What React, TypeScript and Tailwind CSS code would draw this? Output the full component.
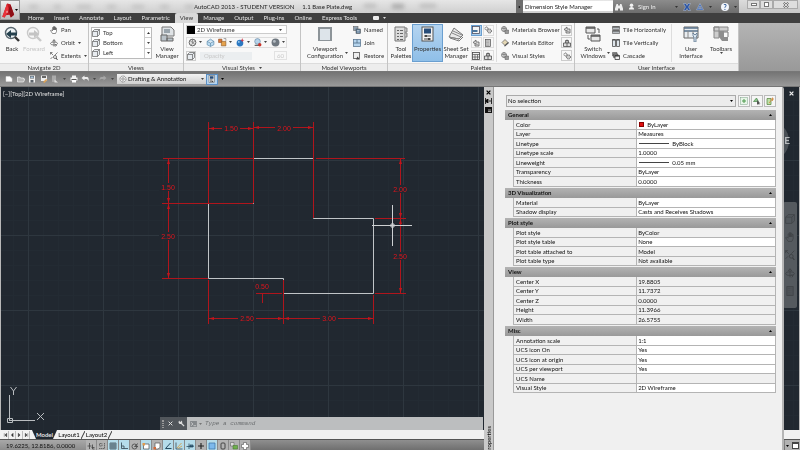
import { ReactNode } from "react";
import clsx from "clsx";

const TABS = [
  "Home", "Insert", "Annotate", "Layout", "Parametric", "View",
  "Manage", "Output", "Plug-ins", "Online", "Express Tools",
];

type Row = { label: string; value: string; readOnly?: boolean; kind?: "swatch" | "line" };

const SECTIONS: { title: string; rows: Row[] }[] = [
  {
    title: "General",
    rows: [
      { label: "Color", value: "ByLayer", kind: "swatch" },
      { label: "Layer", value: "Measures" },
      { label: "Linetype", value: "ByBlock", kind: "line" },
      { label: "Linetype scale", value: "1.0000" },
      { label: "Lineweight", value: "0.05 mm", kind: "line" },
      { label: "Transparency", value: "ByLayer" },
      { label: "Thickness", value: "0.0000" },
    ],
  },
  {
    title: "3D Visualization",
    rows: [
      { label: "Material", value: "ByLayer" },
      { label: "Shadow display", value: "Casts and Receives Shadows" },
    ],
  },
  {
    title: "Plot style",
    rows: [
      { label: "Plot style", value: "ByColor", readOnly: true },
      { label: "Plot style table", value: "None" },
      { label: "Plot table attached to", value: "Model", readOnly: true },
      { label: "Plot table type", value: "Not available", readOnly: true },
    ],
  },
  {
    title: "View",
    rows: [
      { label: "Center X", value: "19.8805", readOnly: true },
      { label: "Center Y", value: "11.7372", readOnly: true },
      { label: "Center Z", value: "0.0000", readOnly: true },
      { label: "Height", value: "11.3966", readOnly: true },
      { label: "Width", value: "26.5755", readOnly: true },
    ],
  },
  {
    title: "Misc",
    rows: [
      { label: "Annotation scale", value: "1:1" },
      { label: "UCS icon On", value: "Yes" },
      { label: "UCS icon at origin", value: "Yes" },
      { label: "UCS per viewport", value: "Yes" },
      { label: "UCS Name", value: "", readOnly: true },
      { label: "Visual Style", value: "2D Wireframe" },
    ],
  },
];

// All glyphs are drawn on a 16x16 grid
const GLYPHS: Record<string, ReactNode> = {
  back: (
    <>
      <circle cx="7" cy="7" r="5.5" fill="#eef3f5" stroke="#59666e" strokeWidth="1.4" />
      <path d="M11 11l4 4" stroke="#333" strokeWidth="2.4" />
      <path d="M2 8l5-4v2.5h6v3H7V12z" fill="#24404d" />
    </>
  ),
  forward: (
    <>
      <circle cx="7" cy="7" r="5.5" fill="#f7f7f7" stroke="#c9c9c9" strokeWidth="1.4" />
      <path d="M11 11l4 4" stroke="#c9c9c9" strokeWidth="2.4" />
      <path d="M13 8L8 4v2.5H3v3h5V12z" fill="#c4c4c4" />
    </>
  ),
  pan: <path d="M5 15L1 9l2-1 2 2V3h2v5-7h2v7-6h2v6-4h2v7l-2 4z" fill="#fff" stroke="#555" strokeWidth="1.3" />,
  orbit: (
    <>
      <ellipse cx="8" cy="9" rx="7" ry="3" fill="none" stroke="#555" strokeWidth="1.4" />
      <path d="M8 15V2M5 5l3-4 3 4M10 11l3 1-2 3" fill="none" stroke="#555" strokeWidth="1.5" />
    </>
  ),
  extents: (
    <>
      <path d="M1 1l5 5M15 1l-5 5M1 14l4-4M1 5V1h4" fill="none" stroke="#555" strokeWidth="1.4" />
      <circle cx="10" cy="10" r="3" fill="#fff" stroke="#444" strokeWidth="1.5" />
      <path d="M12 12l3 4" stroke="#444" strokeWidth="2" />
    </>
  ),
  cube: (
    <>
      <path d="M1 5l4-4h10v10l-4 4H1z" fill="#e8ecf0" stroke="#555" strokeWidth="1.3" />
      <path d="M1 5h10v10M11 5l4-4" fill="none" stroke="#555" strokeWidth="1.3" />
    </>
  ),
  viewManager: (
    <>
      <path d="M3 1h9l3 3v6H3z" fill="#dfe3e6" stroke="#777" />
      <rect x="5" y="3" width="6" height="4" fill="#9aa5ad" />
      <path d="M2 9h6v6H2zM8 12h6v3H8z" fill="#b9c2c9" stroke="#666" />
    </>
  ),
  wheel: (
    <>
      <circle cx="8" cy="8" r="6" fill="#e4e4e4" stroke="#555" strokeWidth="1.5" />
      <path d="M4 5l8 6M12 5l-6 7M8 2v5" stroke="#555" />
    </>
  ),
  cubeBlue: <path d="M2 6l6-4 6 4v6l-6 3-6-3zM2 6l6 3 6-3M8 9v6" fill="#bcdcf2" stroke="#5a87a8" strokeWidth="1.2" />,
  cubeOrange: (
    <>
      <path d="M1 2h6v6H1z" fill="#d9793b" stroke="#8d4a1e" />
      <path d="M6 6h8v8H6z" fill="#e6a24c" stroke="#835022" />
      <path d="M10 1h4v4" fill="none" stroke="#666" />
    </>
  ),
  ballBlue: (
    <>
      <circle cx="7" cy="9" r="6" fill="#2b78c2" />
      <circle cx="5" cy="7" r="1.6" fill="#9fcdf0" />
      <path d="M11 0l1 3 3 1-3 1-1 3-1-3-2-1 2-1z" fill="#c34" />
    </>
  ),
  ballRed: (
    <>
      <circle cx="8" cy="6" r="5" fill="#b6d3ea" stroke="#5a7d99" />
      <path d="M3 13h10" stroke="#555" strokeWidth="2" />
      <circle cx="12" cy="12" r="3" fill="#c9342b" />
    </>
  ),
  ballGray: (
    <>
      <circle cx="8" cy="8" r="7" fill="#6f7880" />
      <circle cx="6" cy="6" r="2.5" fill="#b4bcc3" />
    </>
  ),
  frame: (
    <>
      <rect x="1" y="1" width="14" height="14" fill="#8d9499" />
      <rect x="3" y="3" width="10" height="11" fill="#dde4ea" />
    </>
  ),
  named: (
    <>
      <rect x="1" y="1" width="9" height="8" fill="#8fa2b3" stroke="#555" />
      <rect x="6" y="6" width="9" height="9" fill="#5c7c99" stroke="#444" />
      <path d="M8 9h5M8 12h5" stroke="#fff" />
    </>
  ),
  join: (
    <>
      <rect x="1" y="1" width="14" height="14" fill="#b6d5ee" stroke="#4f6c86" strokeWidth="1.4" />
      <path d="M1 8h14M8 1v7" stroke="#4f6c86" strokeWidth="1.6" />
    </>
  ),
  restore: (
    <>
      <rect x="1" y="1" width="12" height="12" fill="#eee" stroke="#555" strokeWidth="1.6" />
      <path d="M6 15l3-6 5 6z" fill="#444" />
    </>
  ),
  toolPalettes: (
    <>
      <path d="M2 1h10v14H2z" fill="#dcdcdc" stroke="#777" />
      <path d="M12 2h2v4h-2M12 7h2v4h-2" fill="#bbb" stroke="#888" />
      <path d="M4 4h2v1H4zM4 7h2v1H4zM4 10h2v1H4zM4 13h2v1H4zM7 4h3v1H7zM7 7h3v1H7zM7 10h3v1H7zM7 13h3v1H7z" fill="#666" />
    </>
  ),
  properties: (
    <>
      <rect x="2" y="1" width="11" height="14" fill="#f2f2f2" stroke="#555" />
      <rect x="4" y="2.500" width="7" height="5" fill="#274c78" />
      <path d="M4 10h7M4 13h7" stroke="#444" strokeWidth="1.2" />
      <path d="M6 9v2M9 12v2" stroke="#444" strokeWidth="2" />
    </>
  ),
  sheetSet: (
    <>
      <path d="M1 11L6 2l9 7-4 4z" fill="#e9e9e9" stroke="#777" />
      <path d="M4 7l9 4M5 5l9 4M1 11l10 2" stroke="#888" />
      <path d="M2 12l9 3 4-4" fill="none" stroke="#777" />
    </>
  ),
  palette: (
    <>
      <rect x="1" y="1" width="14" height="14" fill="#f4f4f4" stroke="#445" strokeWidth="1.5" />
      <rect x="1" y="8" width="10" height="4" fill="#47749c" />
    </>
  ),
  gears: (
    <>
      <circle cx="5" cy="5" r="3" fill="none" stroke="#555" strokeWidth="2" strokeDasharray="2 1" />
      <circle cx="11" cy="10" r="4" fill="#ccc" stroke="#555" strokeWidth="2" strokeDasharray="2 1" />
    </>
  ),
  markup: <path d="M2 7l6-5v4h6v8H6V9zM6 9l5 2" fill="#ddd" stroke="#555" strokeWidth="1.5" />,
  calc: (
    <>
      <rect x="3" y="1" width="10" height="14" fill="#c9c9c9" stroke="#555" strokeWidth="1.4" />
      <path d="M5 4h6M5 7h6M5 10h6M5 13h6" stroke="#666" strokeDasharray="1 1" />
    </>
  ),
  gridCalc: (
    <>
      <rect x="1" y="1" width="14" height="14" fill="#eee" stroke="#444" strokeWidth="1.6" />
      <path d="M1 5h14M6 5v10M11 5v10M1 10h14" stroke="#444" strokeWidth="1.3" />
    </>
  ),
  toolbox: (
    <>
      <path d="M1 8h14v7H1z" fill="#ddd" stroke="#444" strokeWidth="1.5" />
      <path d="M5 8V3h6v5M8 1v14" fill="none" stroke="#444" strokeWidth="1.5" />
    </>
  ),
  material: (
    <>
      <circle cx="6" cy="6" r="5" fill="#ddd" stroke="#555" strokeWidth="1.3" />
      <path d="M2 5h9M6 1v10M8 8h7v7H8z" fill="#999" stroke="#555" />
    </>
  ),
  materialEdit: (
    <>
      <path d="M8 1l6 6-6 6-6-6z" fill="#e4d7b4" stroke="#555" strokeWidth="1.3" />
      <path d="M6 14l8-8 2 2-8 7z" fill="#555" />
    </>
  ),
  switchWin: (
    <>
      <path d="M1 1h9v6H1zM6 9h9v6H6z" fill="#e8e8e8" stroke="#555" />
      <path d="M1 2h9M6 10h9" stroke="#555" strokeWidth="1.6" />
      <path d="M12 3h2v4M3 9v4h2" fill="none" stroke="#555" />
    </>
  ),
  tileH: (
    <>
      <path d="M1 1h14v6H1zM1 9h14v6H1z" fill="#b9bec2" stroke="#555" strokeWidth="1.2" />
      <path d="M1 2h14M1 10h14" stroke="#444" strokeWidth="2" />
    </>
  ),
  tileV: (
    <>
      <path d="M1 1h6v14H1zM9 1h6v14H9z" fill="#dfe6ec" stroke="#444" strokeWidth="1.5" />
      <path d="M1 2h6M9 2h6" stroke="#444" strokeWidth="2" />
    </>
  ),
  cascade: (
    <>
      <path d="M1 1h9v7H1zM3 4h9v7H3z" fill="#888" stroke="#444" />
      <path d="M6 7h9v8H6z" fill="#eee" stroke="#333" strokeWidth="1.5" />
      <path d="M6 8h9" stroke="#333" strokeWidth="2" />
    </>
  ),
  userInterface: (
    <>
      <path d="M1 1h14v11H1z" fill="#e9edf0" stroke="#666" />
      <path d="M1 2h14M1 5h14" stroke="#58718a" strokeWidth="1.6" />
      <path d="M5 5v7M10 5v3" stroke="#888" />
      <path d="M10 7l2 2 2-2v3l-1 1v5h-2v-5l-1-1z" fill="#dde8f2" stroke="#58718a" strokeWidth=".8" />
    </>
  ),
  toolbars: (
    <>
      <path d="M1 1h5v11H1zM1 1h14v4H1z" fill="#cdcdcd" stroke="#888" />
      <path d="M6 5h5v6h4v4H9l-3-4z" fill="#8d8d8d" />
      <path d="M11 6h4v5" fill="none" stroke="#777" />
    </>
  ),
  page: <path d="M2 3h8l4 4v6H2z" fill="#fff" stroke="#ddd" />,
  open: <path d="M1 4h5l1 2h6v2h3l-3 6H1z" fill="#b4b4b4" stroke="#fff" strokeWidth="1.2" />,
  save: (
    <>
      <path d="M2 1h12v14H2z" fill="#f2f2f2" />
      <path d="M4 2h8v5H4zM5 10h6v5H5z" fill="#5d646b" />
      <path d="M5 3h6v3H5z" fill="#a9c2d9" />
    </>
  ),
  saveAs: (
    <>
      <path d="M2 1h12v11H2z" fill="#eee" />
      <path d="M4 2h8v4H4z" fill="#666" />
      <path d="M6 14l6-6 3 2-6 6z" fill="#d9a25a" />
    </>
  ),
  cloud: (
    <>
      <path d="M2 1h8v13H2z" fill="#aaa" />
      <path d="M7 9l7 6H7z" fill="#ddd" />
    </>
  ),
  print: (
    <>
      <path d="M4 1h8v4H4zM1 5h14v6H1z" fill="#f2f2f2" />
      <path d="M3 9h10" stroke="#555" strokeWidth="2" />
      <path d="M4 10h8v5H4z" fill="#fff" />
    </>
  ),
  undo: <path d="M1 6l6-5v3h5c3 0 4 3 3 9-1-4-3-5-5-5H7v3z" fill="#ececec" />,
  redo: <path d="M15 6L9 1v3H5C2 4 1 7 1 11c1-3 3-3 5-3h3v3z" fill="#a6a6a6" />,
  gear: (
    <>
      <circle cx="8" cy="8" r="6" fill="#eee" stroke="#777" strokeWidth="2" strokeDasharray="2 1" />
      <circle cx="8" cy="8" r="2.5" fill="none" stroke="#777" strokeWidth="1.4" />
    </>
  ),
  binoculars: <path d="M3 2h3v3h4V2h3l3 9v4h-6v-4H6v4H0v-4z" fill="#eee" />,
  person: (
    <>
      <circle cx="8" cy="5" r="4" fill="#f2f2f2" />
      <path d="M2 15c0-4 2-6 6-6s6 2 6 6z" fill="#f2f2f2" />
    </>
  ),
  exchange: <path d="M1 1h5l2 4 2-4h5l-4 7 4 7h-5l-2-4-2 4H1l4-7z" fill="#2b55a5" stroke="#dfe8f5" strokeWidth=".7" />,
  a360: <path d="M8 1l7 13H1zM8 6l-3 5h6z" fill="#3d66b0" fillRule="evenodd" stroke="#dfe8f5" strokeWidth=".7" />,
  snap: <path d="M1 8h8M5 2v12M11 5v9h4M9 11h6" fill="none" stroke="#444" strokeWidth="1.6" />,
  magnet: <path d="M2 13h11V2M3 3h5v5H3z" fill="none" stroke="#555" strokeWidth="1.6" strokeDasharray="3 1" />,
  grid: <path d="M2 2h12v12H2zM6 2v12M10 2v12M2 6h12M2 10h12" fill="none" stroke="#33444f" strokeWidth="1.4" />,
  ortho: <path d="M3 1v12h13M3 8h5v5" fill="none" stroke="#33444f" strokeWidth="1.6" />,
  polar: (
    <>
      <circle cx="7" cy="9" r="5" fill="none" stroke="#444" strokeWidth="1.6" />
      <path d="M7 9l7-6M7 9h7" stroke="#444" strokeWidth="1.6" />
    </>
  ),
  osnap: (
    <>
      <path d="M3 4h11v10H3z" fill="#fff" stroke="#555" strokeWidth="1.5" />
      <path d="M1 2h5v5H1z" fill="#e09a4c" />
    </>
  ),
  osnap3d: (
    <>
      <path d="M4 2h10v9l-4 3H4z" fill="#fff" stroke="#555" strokeWidth="1.4" />
      <path d="M1 10h5v5H1z" fill="#d26a3a" />
    </>
  ),
  angle: <path d="M13 2L3 13h12" fill="none" stroke="#274d63" strokeWidth="2" />,
  ducs: (
    <>
      <path d="M2 1v13h13" fill="none" stroke="#33444f" strokeWidth="1.5" />
      <path d="M4 12l9-10M6 13l8-5" stroke="#d59a3f" strokeWidth="1.6" />
    </>
  ),
  dyn: <path d="M1 9h14M6 3v11M8 6h6v4H8z" fill="#4f7f9c" stroke="#24475c" strokeWidth="1.5" />,
  plus: <path d="M8 2v12M2 8h12" stroke="#222" strokeWidth="2.2" />,
  transparency: <path d="M2 2h12v12H2z" fill="#7cb9ec" stroke="#3f77a8" strokeWidth="1.5" />,
  quick: <rect x="4" y="2" width="8" height="12" rx="2" fill="none" stroke="#444" strokeWidth="2" />,
  cycling: (
    <>
      <path d="M1 1h7v7H1z" fill="#ddd" stroke="#555" />
      <path d="M6 7h9v7H6z" fill="#6faf4e" stroke="#3f7326" />
    </>
  ),
  monitor: <path d="M5 1h6v4h4v6h-4v4H5v-4H1V5h4z" fill="#fff" stroke="#666" strokeWidth="1.4" />,
  pickAdd: (
    <>
      <rect x="1" y="1" width="14" height="14" fill="#e8f5e8" stroke="#7a9f86" />
      <path d="M8 4v8M4 8h8" stroke="#4c9a4c" strokeWidth="2" />
    </>
  ),
  select: (
    <>
      <path d="M1 9l6-7 4 7z" fill="#8cc48c" stroke="#4a864a" strokeWidth="1.4" />
      <path d="M8 6l7 7h-3l1 3-3-2-2 2z" fill="#555" />
    </>
  ),
  quickSelect: (
    <>
      <path d="M2 3h8v12H2z" fill="#bfe0a6" stroke="#4f7f3b" strokeWidth="1.4" />
      <path d="M13 1v7M9 4h7M6 12l7-8" stroke="#d0863a" strokeWidth="1.6" />
    </>
  ),
};

function Glyph({ name, className = "size-2" }: { name: string; className?: string }) {
  return (
    <svg viewBox="0 0 16 16" className={clsx("shrink-0", className)} aria-hidden="true">
      {GLYPHS[name]}
    </svg>
  );
}

function Caret({ className = "text-[#444]" }: { className?: string }) {
  return (
    <svg viewBox="0 0 6 4" className={clsx("h-[2px] w-[3px] shrink-0", className)} aria-hidden="true">
      <path d="M0 0h6L3 4z" fill="currentColor" />
    </svg>
  );
}

function Panel({ title, className, children, caret }: { title: string; className: string; children: ReactNode; caret?: boolean }) {
  return (
    <section className={clsx("flex shrink-0 flex-col border-r border-[#c4c4c4] bg-[#f8f8f8]", className)}>
      <div className="flex h-10 px-[2px] py-px">{children}</div>
      <h2 className="flex h-[8px] items-center justify-center gap-1 border-t border-[#dcdcdc] bg-[#ededed] leading-none text-[#333]">
        {title}
        {caret && <Caret />}
      </h2>
    </section>
  );
}

function BigButton({ icon, lines, className, active, disabled, caret }: {
  icon: string;
  lines: string[];
  className: string;
  active?: boolean;
  disabled?: boolean;
  caret?: boolean;
}) {
  return (
    <button
      disabled={disabled}
      className={clsx(
        "flex shrink-0 flex-col items-center border pt-px",
        active ? "border-[#6a9fd0] bg-linear-to-b from-[#b4d4f0] to-[#8fbfe8]" : "border-transparent",
        disabled ? "text-[#c4c4c4]" : "text-[#333]",
        className
      )}
    >
      <Glyph name={icon} className="mb-[3px] size-4" />
      {lines.map((line) => (
        <span key={line} className="leading-[7px] whitespace-nowrap">{line}</span>
      ))}
      {caret && <Caret />}
    </button>
  );
}

function SmallList({ items, className }: { items: [string, string, boolean?][]; className: string }) {
  return (
    <div className={clsx("flex shrink-0 flex-col justify-around", className)}>
      {items.map(([icon, label, caret]) => (
        <button key={label} className="flex items-center gap-[3px] leading-[8px] whitespace-nowrap">
          <Glyph name={icon} />
          {label}
          {caret && <Caret />}
        </button>
      ))}
    </div>
  );
}

function TitleBar() {
  return (
    <header className="flex h-[13px] bg-linear-to-b from-[#e6e6e6] to-[#cfcfcf] pl-[21px]">
      <div className="flex min-w-0 flex-1 items-center">
        <div className="flex w-[173px] shrink-0 gap-4 pl-2 blur-[2px]">
          {["w-4", "w-3", "w-6", "w-4", "w-5", "w-4", "w-4"].map((w, i) => (
            <span key={i} className={clsx("h-[4px] shrink bg-[#c2c2c2]", w)} />
          ))}
        </div>
        <h1 className="flex gap-2 leading-none whitespace-nowrap text-[#222]">
          <span>AutoCAD 2013 - STUDENT VERSION</span>
          <span>1.1 Base Plate.dwg</span>
        </h1>
        <div className="flex gap-4 pl-3 blur-[2px]">
          <span className="h-[4px] w-3 bg-[#bbb]" />
          <span className="h-[5px] w-3 bg-[#aaa]" />
          <span className="h-[4px] w-4 bg-[#bbb]" />
        </div>
      </div>
      <button aria-label="Expand search" className="flex w-[7px] items-center justify-center bg-[#6e6e6e]">
        <Caret className="-rotate-90 text-black" />
      </button>
      <input
        aria-label="Search"
        defaultValue="Dimension Style Manager"
        className="mt-px mb-[2px] w-[90px] bg-white px-[2px] leading-none text-[#222] outline-none"
      />
      <div className="flex w-[126px] items-center bg-linear-to-b from-[#8c8c8c] to-[#6d6d6d] px-[2px] text-[#f0f0f0]">
        <button aria-label="Find" className="mr-[5px]"><Glyph name="binoculars" /></button>
        <button className="flex items-center gap-[3px] whitespace-nowrap"><Glyph name="person" className="size-[7px]" />Sign In</button>
        <span className="flex flex-1 items-center justify-end gap-[5px]">
          <Caret className="text-[#333]" />
          <button aria-label="Exchange apps"><Glyph name="exchange" /></button>
          <button aria-label="Autodesk 360"><Glyph name="a360" /></button>
          <Caret className="text-[#333]" />
          <button aria-label="Help" className="ml-1 size-[8px] rounded-full bg-[#f2f6fb] text-[7px] leading-[8px] font-bold text-[#24508f]">?</button>
          <Caret className="text-[#333]" />
        </span>
      </div>
      <div className="flex w-[61px] items-start bg-linear-to-b from-[#dcdcdc] to-[#c6c6c6] pr-[2px] pl-2">
        <button aria-label="Minimize" className="flex h-[9px] w-[13px] items-center justify-center border border-[#aaa] bg-[#dedede]">
          <span className="h-[3px] w-[6px] border border-[#777] bg-white" />
        </button>
        <button aria-label="Maximize" className="flex h-[9px] w-[13px] items-center justify-center border border-[#aaa] bg-[#dedede]">
          <span className="size-[5px] border border-[#777] bg-white" />
        </button>
        <button aria-label="Close window" className="flex h-[9px] flex-1 items-center justify-center border border-[#aaa] bg-[#dedede]">
          <svg viewBox="0 0 8 8" className="size-[6px]"><path d="M1 1l6 6M7 1L1 7" stroke="#666" strokeWidth="2.4" /><path d="M1 1l6 6M7 1L1 7" stroke="#fff" strokeWidth="1" /></svg>
        </button>
      </div>
    </header>
  );
}

function Ribbon() {
  return (
    <div className="flex h-12 bg-linear-to-b from-[#b4b4b4] to-[#999] text-[#333]">
      <Panel title="Navigate 2D" className="w-[89px]">
        <BigButton icon="back" lines={["Back"]} className="w-[20px]" />
        <BigButton icon="forward" lines={["Forward"]} className="w-[24px]" disabled />
        <SmallList className="ml-1" items={[["pan", "Pan"], ["orbit", "Orbit", true], ["extents", "Extents", true]]} />
      </Panel>
      <Panel title="Views" className="w-[95px]">
        <div className="my-[3px] flex w-[61px] shrink-0 border border-[#bbb] bg-white">
          <SmallList className="flex-1" items={[["cube", "Top"], ["cube", "Bottom"], ["cube", "Left"]]} />
          <div className="flex w-[7px] flex-col border-l border-[#ccc]">
            <button aria-label="Scroll up" className="flex flex-1 items-center justify-center"><Caret className="rotate-180" /></button>
            <button aria-label="Scroll down" className="flex flex-1 items-center justify-center border-y border-[#ccc]"><Caret /></button>
            <button aria-label="More views" className="flex flex-1 items-center justify-center"><Caret /></button>
          </div>
        </div>
        <BigButton icon="viewManager" lines={["View", "Manager"]} className="w-[30px]" />
      </Panel>
      <Panel title="Visual Styles" className="w-[117px]" caret>
        <div className="flex flex-1 flex-col justify-around">
          <div className="flex h-[9px] w-[101px] items-center gap-[2px] border border-[#ccc] bg-white pr-1">
            <span className="size-[8px] shrink-0 bg-black" />
            <select aria-label="Visual style" className="min-w-0 flex-1 appearance-none leading-none">
              <option>2D Wireframe</option>
            </select>
            <Caret />
          </div>
          <div className="flex w-[101px] justify-between border border-[#ddd] px-px">
            {["wheel", "cubeBlue", "cubeOrange", "ballBlue", "ballRed", "ballGray"].map((icon) => (
              <button key={icon} aria-label={icon} className="flex items-center gap-[2px]">
                <Glyph name={icon} className="size-[9px]" />
                {icon !== "cubeBlue" && <Caret />}
              </button>
            ))}
          </div>
          <div className="flex h-[10px] w-[101px] items-center gap-1 text-[#c8c8c8]">
            <span className="flex size-[10px] items-center justify-center border border-[#ccc]"><Glyph name="cube" /></span>
            <span className="w-[52px] bg-[#ebeef0] pl-1 leading-[8px]">Opacity</span>
            <span className="ml-auto border border-[#e2e2e2] px-[2px] leading-[7px]">60</span>
          </div>
        </div>
      </Panel>
      <Panel title="Model Viewports" className="w-[87px]">
        <BigButton icon="frame" lines={["Viewport", "Configuration"]} className="ml-[2px] w-[40px]" />
        <span className="mt-7"><Caret /></span>
        <SmallList className="ml-[5px]" items={[["named", "Named"], ["join", "Join"], ["restore", "Restore"]]} />
      </Panel>
      <Panel title="Palettes" className="w-[187px]">
        <BigButton icon="toolPalettes" lines={["Tool", "Palettes"]} className="w-[22px]" />
        <BigButton icon="properties" lines={["Properties"]} className="w-[31px]" active />
        <BigButton icon="sheetSet" lines={["Sheet Set", "Manager"]} className="w-[26px]" />
        <div className="ml-px grid w-[24px] shrink-0 grid-cols-2 place-items-center">
          {["palette", "gears", "markup", "calc", "gridCalc", "toolbox"].map((icon, i) => (
            <button
              key={icon}
              aria-label={icon}
              className={clsx(
                "flex size-[11px] items-center justify-center border",
                i === 0 ? "border-[#6a9fd0] bg-[#a9cdec]" : "border-[#ddd]"
              )}
            >
              <Glyph name={icon} />
            </button>
          ))}
        </div>
        <SmallList
          className="ml-[2px] border-l border-[#ddd] pl-1"
          items={[["material", "Materials Browser"], ["materialEdit", "Materials Editor"], ["material", "Visual Styles"]]}
        />
        <div className="ml-auto flex flex-col justify-around">
          {["markup", "toolbox", "gears"].map((icon) => (
            <button key={icon} aria-label={icon} className="flex size-[11px] items-center justify-center border border-[#ccc]">
              <Glyph name={icon} />
            </button>
          ))}
        </div>
      </Panel>
      <Panel title="User Interface" className="w-[164px]">
        <BigButton icon="switchWin" lines={["Switch", "Windows"]} className="ml-[2px] w-[28px]" />
        <span className="mt-7"><Caret /></span>
        <SmallList className="ml-[2px]" items={[["tileH", "Tile Horizontally"], ["tileV", "Tile Vertically"], ["cascade", "Cascade"]]} />
        <div className="ml-auto flex border-l border-[#ddd] pl-1">
          <BigButton icon="userInterface" lines={["User", "Interface"]} className="w-[30px]" />
          <BigButton icon="toolbars" lines={["Toolbars"]} className="w-[30px]" caret />
        </div>
      </Panel>
    </div>
  );
}

function QuickAccess() {
  return (
    <div className="flex h-4 items-center border-y border-[#777] bg-linear-to-b from-[#747474] to-[#9a9a9a] pl-[5px] text-[#111]">
      <div className="flex w-[112px] items-center justify-between pr-[3px]">
        {["page", "open", "save", "saveAs", "cloud"].map((icon) => (
          <button key={icon} aria-label={icon}><Glyph name={icon} /></button>
        ))}
        <Caret />
        <button aria-label="print"><Glyph name="print" /></button>
        <button aria-label="undo"><Glyph name="undo" /></button>
        <Caret />
        <button aria-label="redo"><Glyph name="redo" /></button>
        <Caret />
      </div>
      <div className="flex h-[10px] w-[89px] items-center gap-px bg-linear-to-b from-[#f2f2f2] to-[#cfcfcf] px-[2px]">
        <Glyph name="gear" />
        <select aria-label="Workspace" className="min-w-0 flex-1 appearance-none leading-none">
          <option>Drafting &amp; Annotation</option>
        </select>
        <Caret />
      </div>
      <button aria-label="Properties palette" className="flex h-[11px] w-[12px] items-center justify-center border border-[#5b8fc4] bg-[#b4d4f0]">
        <Glyph name="properties" />
      </button>
      <button aria-label="Customize" className="ml-[3px] flex"><Caret className="text-black" /></button>
    </div>
  );
}

function DimText({ x, y, children }: { x: number; y: number; children: string }) {
  return (
    <>
      <rect x={x - 9} y={y - 4} width="18" height="8" fill="#212830" />
      <text x={x} y={y + 3} textAnchor="middle" fontSize="7" fill="#e0141c">{children}</text>
    </>
  );
}

function Drawing() {
  return (
    <svg className="block size-full font-['Liberation_Sans',sans-serif]" role="img" aria-label="Base plate drawing">
      <defs>
        <pattern id="minor" x="12" y="13" width="15" height="15" patternUnits="userSpaceOnUse">
          <path d="M.5 0v15M0 .5h15" stroke="#232b33" fill="none" />
        </pattern>
        <pattern id="major" x="27" y="73" width="75" height="75" patternUnits="userSpaceOnUse">
          <path d="M.5 0v75M0 .5h75" stroke="#2e373f" fill="none" />
        </pattern>
      </defs>
      <rect width="100%" height="100%" fill="url(#minor)" />
      <rect width="100%" height="100%" fill="url(#major)" />
      <g transform="translate(-1 -87)">
        {/* plate outline */}
        <path
          d="M253.5 158.5h60v60h60v75h-90v-15h-75v-75h45z"
          fill="none"
          stroke="#c0c4c7"
        />
        {/* extension and dimension lines */}
        <g stroke="#b0151c" fill="none">
          <path d="M208.5 122v81M253.5 122v81M313.5 122v96M208.5 128.5h45M253.5 127.5h60" />
          <path d="M163 158.5h90M162 203.5h91M162 278.5h46M168.5 158v120" />
          <path d="M316 158.5h89M375 218.5h31M375 293.5h31M400.5 158v135" />
          <path d="M208.5 280v44M283.5 280v44M373.5 295v29M208.5 318.5h165M256 293.5h26M262.5 293v10" />
        </g>
        <g fill="#c4141c">
          <path d="M209 128.5l5-1.5v3zM253 128.5l-5-1.5v3zM254 127.5l5-1.5v3zM313 127.5l-5-1.5v3z" />
          <path d="M168.5 159l-1.5 5h3zM168.5 203l-1.5-5h3zM168.5 204l-1.5 5h3zM168.5 278l-1.5-5h3z" />
          <path d="M400.5 159l-1.5 5h3zM400.5 218l-1.5-5h3zM400.5 219l-1.5 5h3zM400.5 293l-1.5-5h3z" />
          <path d="M209 318.5l5-1.5v3zM283 318.5l-5-1.5v3zM284 318.5l5-1.5v3zM373 318.5l-5-1.5v3z" />
        </g>
        <DimText x={231} y={128}>1.50</DimText>
        <DimText x={284} y={128}>2.00</DimText>
        <DimText x={168} y={187}>1.50</DimText>
        <DimText x={168} y={236}>2.50</DimText>
        <DimText x={400} y={189}>2.00</DimText>
        <DimText x={400} y={256}>2.50</DimText>
        <DimText x={262} y={286}>0.50</DimText>
        <DimText x={247} y={318}>2.50</DimText>
        <DimText x={329} y={318}>3.00</DimText>
        {/* crosshair */}
        <path d="M372 225.5h40M392.5 205v41M391 224h3v3h-3z" fill="none" stroke="#cdd0d2" />
        {/* UCS icon */}
        <g stroke="#b9bdc0" fill="none">
          <path d="M7.5 418.5h5v4h-5zM9.5 395v26M10 420.5h25" />
          <path d="M10.5 387l3 4 3-4M13.5 391v4M37 413l7 7M44 413l-7 7" />
        </g>
      </g>
    </svg>
  );
}

function CommandLine() {
  return (
    <div className="absolute right-[316px] bottom-0 left-[159px] flex h-[13px] bg-[#bcbebf]">
      <div className="flex w-[27px] items-center justify-around bg-[#51565b] text-[#ddd]">
        <span className="h-2 w-[2px] border-x border-dotted border-[#999]" />
        <button aria-label="Close command line">
          <svg viewBox="0 0 8 8" className="size-[5px]"><path d="M1 1l6 6M7 1L1 7" stroke="currentColor" strokeWidth="1.6" /></svg>
        </button>
        <button aria-label="Customize command line">
          <svg viewBox="0 0 16 16" className="size-[7px]"><path d="M1 4l3-3v3h3V1c4 2 3 5 2 6l6 6-2 2-6-6C5 10 1 9 1 4z" fill="currentColor" /></svg>
        </button>
      </div>
      <label htmlFor="command" className="flex items-center gap-[2px] pr-[3px] pl-[3px]">
        <svg viewBox="0 0 16 14" className="h-[6px] w-[7px]" aria-label="Command">
          <rect width="16" height="14" fill="#85898c" />
          <path d="M2 3l5 4-5 4M8 11h6" stroke="#ddd" strokeWidth="1.6" fill="none" />
        </svg>
        <Caret className="text-[#777]" />
      </label>
      <input
        id="command"
        placeholder="Type a command"
        className="min-w-0 flex-1 font-['Liberation_Mono',monospace] text-[6px] italic outline-none placeholder:text-[#6b6e70]"
      />
    </div>
  );
}

const SLASH = (
  <svg viewBox="0 0 4 8" className="h-[8px] w-[4px]" aria-hidden="true">
    <path d="M0 8L4 0" stroke="#333" />
  </svg>
);

function LayoutTabs() {
  return (
    <nav className="flex h-[9px] items-center bg-[#f1f1f1] pl-[2px] text-black">
      {["M2 0v6M6 0L3 3l3 3z", "M5 0L2 3l3 3z", "M2 0l3 3-3 3z", "M2 0l3 3-3 3zM6 0v6"].map((d) => (
        <button key={d} aria-label="Scroll layouts" className="flex h-[8px] w-[7px] items-center justify-center border-r border-[#bbb]">
          <svg viewBox="0 0 8 6" className="h-[4px] w-[5px]"><path d={d} fill="#333" stroke="#333" strokeWidth=".6" /></svg>
        </button>
      ))}
      <button className="ml-[2px] h-full w-[25px] bg-[#212830] leading-none font-bold text-[#e4e4e4] [clip-path:polygon(0_0,100%_0,84%_100%,16%_100%)]">Model</button>
      <button className="w-[24px] leading-none">Layout1</button>
      {SLASH}
      <button className="w-[23px] leading-none">Layout2</button>
      {SLASH}
    </nav>
  );
}

const MODES: [string, boolean][] = [
  ["snap", false], ["magnet", false], ["grid", true], ["ortho", true], ["polar", false],
  ["osnap", true], ["osnap3d", false], ["angle", true], ["ducs", true], ["dyn", true],
  ["plus", false], ["transparency", true], ["quick", false], ["cycling", false], ["monitor", false],
];

function StatusBar() {
  return (
    <footer className="flex h-[12px] items-center border-t border-[#555] bg-linear-to-b from-[#8f8f8f] to-[#6c6c6c] text-[#111]">
      <span className="flex h-full w-[86px] items-center bg-linear-to-b from-[#a8a8a8] to-[#8a8a8a] pl-[6px] leading-none">
        19.6225, 12.8186, 0.0000
      </span>
      {MODES.map(([icon, on]) => (
        <button
          key={icon}
          aria-label={icon}
          aria-pressed={on}
          className={clsx(
            "flex h-full w-[11px] items-center justify-center border-r border-[#8a8a8a]",
            on ? "bg-[#b5dcea]" : "bg-[#b2b2b2]"
          )}
        >
          <Glyph name={icon} />
        </button>
      ))}
      <div className="ml-auto flex h-full w-[15px] items-center justify-between bg-[#b2b2b2] px-px">
        <Caret className="text-black" />
        <button aria-label="Clean screen" className="h-[7px] w-[7px] border border-t-2 border-[#444] bg-white" />
      </div>
    </footer>
  );
}

function PropertiesPalette() {
  return (
    <aside className="absolute top-0 right-[16px] bottom-0 flex w-[300px] rounded-t-[2px] border-r-2 border-b border-r-[#b5b5b5] border-b-[#666] bg-[#f0f0f0]">
      <div className="flex w-[10px] flex-col items-center gap-[3px] border-r border-[#999] bg-[#c9c9c9] pt-[3px] text-black">
        <button aria-label="Close palette">
          <svg viewBox="0 0 8 8" className="block size-[5px]"><path d="M1 1l6 6M7 1L1 7" stroke="#000" strokeWidth="2" /></svg>
        </button>
        <button aria-label="Auto-hide">
          <svg viewBox="0 0 14 12" className="block h-[6px] w-[7px]"><path d="M1 0v12M13 0v12M1 6l4-4v8zM8 6h4M6 2v8" fill="#000" stroke="#000" strokeWidth="1.6" /></svg>
        </button>
        <button aria-label="Palette menu">
          <svg viewBox="0 0 14 12" className="block h-[6px] w-[7px]"><rect width="14" height="12" fill="#111" /><path d="M6 6h6M6 9h6" stroke="#ddd" strokeWidth="1.4" /></svg>
        </button>
        <h2 className="mt-auto rotate-180 leading-[8px] [writing-mode:vertical-rl]" aria-label="Properties">roperties</h2>
      </div>
      <div className="min-w-0 flex-1 pt-2 pr-[6px] pl-[11px]">
        <div className="mb-[3px] flex h-[12px] items-center gap-px pl-px">
          <div className="mr-px flex h-full min-w-0 flex-1 items-center border border-[#aaa] bg-[#ececec] pr-[2px] pl-px">
            <select aria-label="Selection" className="min-w-0 flex-1 appearance-none leading-none text-[#111]">
              <option>No selection</option>
            </select>
            <Caret className="text-black" />
          </div>
          {["pickAdd", "select", "quickSelect"].map((icon) => (
            <button key={icon} aria-label={icon} className="flex size-[12px] items-center justify-center border border-[#bbb] bg-[#f6f6f6]">
              <Glyph name={icon} />
            </button>
          ))}
        </div>
        {SECTIONS.map((section) => (
          <section key={section.title} className="mb-px">
            <h3 className="flex h-[10px] items-center justify-between bg-linear-to-b from-[#b3b3b3] to-[#999] pr-1 pl-[3px] leading-none font-bold text-[#111]">
              {section.title}
              <Caret className="rotate-180 text-black" />
            </h3>
            <div className="pl-2">
              <table className="w-full table-fixed border-separate border-spacing-0 border-l border-[#b4b4b4] text-[#111]">
                <tbody>
                  {section.rows.map((row) => (
                    <tr key={row.label} className="odd:h-[10px] even:h-[9px]">
                      <th scope="row" className="w-[47%] border-r border-b border-[#b4b4b4] p-0 pl-[2px] text-left leading-[8px] font-normal">
                        {row.label}
                      </th>
                      <td
                        className={clsx(
                          "border-r border-b border-[#b4b4b4] p-0 pl-px leading-[8px]",
                          !row.readOnly && "bg-white"
                        )}
                      >
                        <span className="flex items-center">
                          {row.kind === "swatch" && <span className="mr-[3px] ml-px size-[5px] border border-[#800] bg-[#e01010]" />}
                          {row.kind === "line" && <span className="mr-[3px] ml-px h-px w-[30px] bg-[#444]" />}
                          {row.value}
                        </span>
                      </td>
                    </tr>
                  ))}
                </tbody>
              </table>
            </div>
          </section>
        ))}
      </div>
    </aside>
  );
}

function NavBar() {
  return (
    <div className="absolute top-[115px] right-[2px] flex h-[106px] w-[14px] flex-col items-center justify-around rounded-[2px] bg-[#555a5f] py-2">
      {["cube", "pan", "extents", "orbit", "calc"].map((icon) => (
        <button key={icon} aria-label={`${icon} tool`} className="opacity-40 mix-blend-multiply"><Glyph name={icon} className="size-[10px]" /></button>
      ))}
    </div>
  );
}

export default function App() {
  return (
    <div className="flex min-h-screen flex-col overflow-hidden bg-[#9a9a9a] font-[Lato,'Open_Sans',sans-serif] text-[6px] leading-none">
      <div className="relative">
        <TitleBar />
        <nav className="flex h-[10px] items-stretch bg-[#3f3f3f] pl-[23px] text-[#e6e6e6]">
          {TABS.map((tab) => (
            <button
              key={tab}
              className={clsx(
                "px-[5px] leading-none whitespace-nowrap",
                tab === "View" && "rounded-t-[2px] bg-[#d9d9d9] text-[#333]"
              )}
            >
              {tab}
            </button>
          ))}
          <button aria-label="Minimize ribbon" className="ml-[11px] flex items-center gap-1">
            <span className="flex h-[4px] w-[6px] items-center justify-center rounded-[1px] bg-[#eee]"><Caret className="rotate-180" /></span>
            <Caret className="text-[#ddd]" />
          </button>
        </nav>
        <button aria-label="Application menu" className="absolute top-0 left-0 flex h-[20px] w-[20px] items-center border border-[#999] bg-linear-to-b from-[#eee] to-[#bcbcbc]">
          <svg viewBox="0 0 28 36" className="h-[17px] w-[14px]">
            <path d="M2 31L12 3l7 2 8 22-7 6-3-6-8 1-2 5z" fill="#c01820" />
            <path d="M12 3l4 14-9 16-5-2z" fill="#e8333a" />
            <path d="M12 18l2 4h-4z" fill="#f4d5d5" />
            <path d="M19 5l8 22-7 6-5-16z" fill="#8e0f16" />
          </svg>
          <Caret className="text-black" />
        </button>
      </div>
      <Ribbon />
      <QuickAccess />
      <div className="relative flex flex-1 flex-col">
        <main className="relative min-h-[343px] flex-1 overflow-hidden border-x border-[#b8b8b8] bg-[#212830]">
          <div className="absolute inset-0"><Drawing /></div>
          <span className="absolute top-[3px] left-[2px] leading-[8px] text-[#e0e0e0]">[−][Top][2D Wireframe]</span>
          {/* view cube, mostly hidden behind the palette */}
          <div className="absolute top-[34px] right-[10px] size-[40px] rounded-full bg-[#4a5056]" />
          <span className="absolute top-[48px] right-[9px] text-[10px] font-bold text-[#b9bcbf]">E</span>
          <button aria-label="Close drawing" className="absolute top-[4px] right-[5px]">
            <svg viewBox="0 0 8 8" className="block size-[5px]"><path d="M1 1l6 6M7 1L1 7" stroke="#eee" strokeWidth="2" /></svg>
          </button>
          <NavBar />
          <CommandLine />
        </main>
        <LayoutTabs />
        <StatusBar />
        <PropertiesPalette />
      </div>
    </div>
  );
}
